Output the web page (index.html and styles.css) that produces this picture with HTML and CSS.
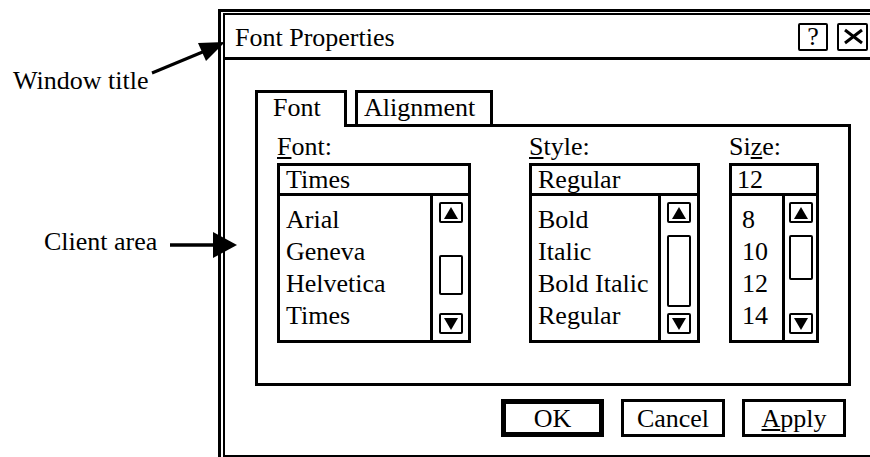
FILE: index.html
```html
<!DOCTYPE html>
<html lang="en">
<head>
  <meta charset="UTF-8" />
  <title>Font Properties</title>
  <link rel="stylesheet" href="styles.css">
</head>
<body>

  <div class="page">
    <div class="notes">
      <div class="note note-title">Window title</div>
      <div class="note note-client">Client area</div>
    </div>

    <div class="window">
      <div class="frame">
        <div class="titlebar">
          <span class="title">Font Properties</span>
          <div class="title-buttons">
            <span class="tbtn">?</span>
            <span class="tbtn tbtn-close">
              <svg width="27" height="24" viewBox="0 0 27 24">
                <path d="M6 5 L23 18 M23 5 L6 18" stroke="#000" stroke-width="3" fill="none"/>
              </svg>
            </span>
          </div>
        </div>

        <div class="client">
          <div class="tabs">
            <div class="tab tab-active">Font</div>
            <div class="tab tab-align">Alignment</div>
          </div>

          <div class="panel">
            <div class="column col-font">
              <div class="label"><u>F</u>ont:</div>
              <div class="listbox">
                <div class="field">Times</div>
                <div class="list-body">
                  <div class="items">
                    <div>Arial</div>
                    <div>Geneva</div>
                    <div>Helvetica</div>
                    <div>Times</div>
                  </div>
                  <div class="scroll">
                    <span class="arrow arrow-up"></span>
                    <span class="thumb"></span>
                    <span class="arrow arrow-down"></span>
                  </div>
                </div>
              </div>
            </div>

            <div class="column col-style">
              <div class="label"><u>S</u>tyle:</div>
              <div class="listbox">
                <div class="field">Regular</div>
                <div class="list-body">
                  <div class="items">
                    <div>Bold</div>
                    <div>Italic</div>
                    <div>Bold Italic</div>
                    <div>Regular</div>
                  </div>
                  <div class="scroll">
                    <span class="arrow arrow-up"></span>
                    <span class="thumb"></span>
                    <span class="arrow arrow-down"></span>
                  </div>
                </div>
              </div>
            </div>

            <div class="column col-size">
              <div class="label">Si<u>z</u>e:</div>
              <div class="listbox">
                <div class="field">12</div>
                <div class="list-body">
                  <div class="items">
                    <div>8</div>
                    <div>10</div>
                    <div>12</div>
                    <div>14</div>
                  </div>
                  <div class="scroll">
                    <span class="arrow arrow-up"></span>
                    <span class="thumb"></span>
                    <span class="arrow arrow-down"></span>
                  </div>
                </div>
              </div>
            </div>
          </div>

          <div class="buttons">
            <span class="btn btn-default">OK</span>
            <span class="btn">Cancel</span>
            <span class="btn"><u>A</u>pply</span>
          </div>
        </div>
      </div>
    </div>

    <svg class="callouts" width="870" height="457" viewBox="0 0 870 457">
      <line x1="152" y1="73" x2="205" y2="51" stroke="#000" stroke-width="3"/>
      <polygon points="225,42 198,43 206,61" fill="#000"/>
      <line x1="170" y1="245" x2="216" y2="245" stroke="#000" stroke-width="3.5"/>
      <polygon points="213,232 237,245 213,258" fill="#000"/>
    </svg>
  </div>

</body>
</html>
```

FILE: styles.css
```css
body {
  margin: 0;
  background: #fff;
  color: #000;
  font-family: 'Liberation Serif', 'Times New Roman', serif;
  font-size: 26px;
}
.page {
  position: relative;
  display: flex;
  width: 870px;
  height: 457px;
  overflow: hidden;
}
.notes {
  width: 218px;
  flex-shrink: 0;
}
.note {
  line-height: 30px;
  white-space: nowrap;
}
.note-title {
  margin: 66px 0 0 13px;
}
.note-client {
  margin: 131px 0 0 44px;
}
.callouts {
  position: absolute;
  top: 0;
  left: 0;
  pointer-events: none;
}

/* window frame */
.window {
  flex-shrink: 0;
  margin-top: 9px;
  border: 3px solid #000;
  padding: 1px 2px 2px 2px;
  height: 460px;
}
.frame {
  width: 648px;
  border: 2px solid #000;
}
.titlebar {
  display: flex;
  justify-content: space-between;
  height: 42px;
  padding: 0 5px 0 10px;
  border-bottom: 3px solid #000;
}
.title {
  padding-top: 4px;
  line-height: 38px;
}
.title-buttons {
  display: flex;
  gap: 9px;
  margin-top: 8px;
}
.tbtn {
  box-sizing: border-box;
  width: 30px;
  height: 28px;
  border: 2px solid #000;
  border-radius: 2px;
  display: flex;
  align-items: center;
  justify-content: center;
  line-height: 1;
}
.tbtn-close {
  width: 31px;
}

/* client area */
.client {
  padding: 30px 0 18px 30px;
}
.tabs {
  display: flex;
  align-items: flex-end;
  gap: 8px;
}
.tab {
  box-sizing: border-box;
  height: 34px;
  border: 3px solid #000;
  border-bottom: none;
  line-height: 30px;
}
.tab-active {
  position: relative;
  z-index: 1;
  width: 92px;
  height: 37px;
  margin-bottom: -3px;
  padding-left: 15px;
  background: #fff;
}
.tab-align {
  width: 138px;
  padding-left: 6px;
}
.panel {
  box-sizing: border-box;
  width: 596px;
  height: 262px;
  border: 3px solid #000;
  padding: 5px 0 0 19px;
  display: flex;
}
.label {
  line-height: 30px;
  margin-bottom: 1px;
}
.col-font { width: 194px; }
.col-style { width: 171px; margin-left: 58px; }
.col-size { width: 90px; margin-left: 29px; }

.listbox {
  box-sizing: border-box;
  height: 180px;
  border: 3px solid #000;
  display: flex;
  flex-direction: column;
}
.field {
  height: 27px;
  line-height: 27px;
  padding-left: 6px;
  border-bottom: 3px solid #000;
}
.list-body {
  flex: 1;
  display: flex;
}
.items {
  flex: 1;
  padding: 8px 0 0 6px;
  line-height: 32px;
  white-space: nowrap;
}
.col-size .items { padding-left: 10px; }
.col-size .field { padding-left: 5px; }

.scroll {
  width: 35px;
  border-left: 3px solid #000;
  display: flex;
  flex-direction: column;
  align-items: center;
  padding: 6px 0;
}
.col-style .scroll { width: 36px; }
.col-size .scroll { width: 31px; }

.arrow {
  box-sizing: border-box;
  width: 24px;
  height: 21px;
  border: 2px solid #000;
  border-radius: 2px;
  display: flex;
  align-items: center;
  justify-content: center;
}
.arrow::after {
  content: "";
  width: 0;
  height: 0;
  border-left: 7px solid transparent;
  border-right: 7px solid transparent;
}
.arrow-up::after { border-bottom: 12px solid #000; }
.arrow-down::after { border-top: 12px solid #000; }
.arrow-down { margin-top: auto; }

.thumb {
  box-sizing: border-box;
  width: 24px;
  border: 2px solid #000;
  border-radius: 2px;
  margin-top: 32px;
  height: 40px;
}
.col-style .thumb { margin-top: 12px; height: 72px; }
.col-size .thumb { margin-top: 12px; height: 45px; }

/* dialog buttons */
.buttons {
  box-sizing: border-box;
  width: 596px;
  display: flex;
  justify-content: flex-end;
  gap: 17px;
  padding-right: 5px;
  margin-top: 13px;
}
.btn {
  box-sizing: border-box;
  width: 104px;
  height: 38px;
  border: 3px solid #000;
  padding-top: 1px;
  line-height: 32px;
  text-align: center;
}
.btn-default {
  width: 103px;
  border-width: 5px;
  line-height: 28px;
}
```
